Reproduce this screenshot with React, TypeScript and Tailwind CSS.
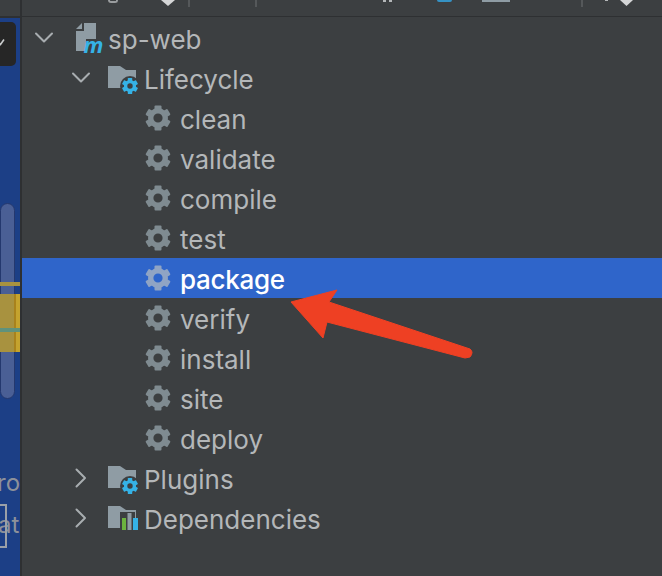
import React from "react";

function Gear({ color = "#7f8b91", size = 26 }: { color?: string; size?: number }) {
  const teeth = [0, 60, 120, 180, 240, 300];
  return (
    <svg width={size} height={size} viewBox="0 0 26 26" className="shrink-0">
      {teeth.map((a) => (
        <rect key={a} x="9.5" y="0.4" width="7" height="6" rx="1" fill={color} transform={`rotate(${a} 13 13)`} />
      ))}
      <circle cx="13" cy="13" r="7.3" fill="none" stroke={color} strokeWidth="5.4" />
    </svg>
  );
}

function Chevron({ open }: { open: boolean }) {
  return (
    <svg width="20" height="20" viewBox="0 0 20 20" className="shrink-0" fill="none" stroke="#a8adb0" strokeWidth="2" strokeLinecap="round" strokeLinejoin="round">
      {open ? <path d="M2 5.5 L10 13.5 L18 5.5" /> : <path d="M5.5 1.5 L14 10 L5.5 18.5" />}
    </svg>
  );
}

function FolderGear() {
  return (
    <svg width="32" height="32" viewBox="0 0 32 32" className="shrink-0">
      <path d="M0 4 H12 L18 8 H28 V26 H0 Z" fill="#8f9ca4" />
      <circle cx="22" cy="24" r="10" fill="#3c3f41" />
      <g fill="#35b2e6">
        {[0, 60, 120, 180, 240, 300].map((a) => (
          <rect key={a} x="19.8" y="16" width="4.4" height="4" rx="0.5" transform={`rotate(${a} 22 24)`} />
        ))}
      </g>
      <circle cx="22" cy="24" r="4.4" fill="none" stroke="#35b2e6" strokeWidth="3.4" />
    </svg>
  );
}

function FolderBars() {
  return (
    <svg width="32" height="32" viewBox="0 0 32 32" className="shrink-0">
      <path d="M0 4 H12 L18 8 H28 V26 H0 Z" fill="#8f9ca4" />
      <rect x="12" y="10" width="20" height="22" fill="#3c3f41" />
      <rect x="27" y="8" width="1" height="8" fill="#8f9ca4" />
      <rect x="14" y="16" width="4" height="12" fill="#6cb33f" />
      <rect x="19.5" y="11" width="4" height="17" fill="#8f9ca4" />
      <rect x="25" y="16" width="5" height="12" fill="#35b2e6" />
    </svg>
  );
}

function ModuleIcon() {
  return (
    <svg width="34" height="40" viewBox="0 -2 34 40" className="shrink-0">
      <path d="M10 3 H22 V19 H12 V31 H2 V11 H10 Z" fill="#8f9ca4" />
      <path d="M2 9 L8 3 V9 Z" fill="#8f9ca4" />
      <text x="9.5" y="33" fontFamily="'Open Sans', sans-serif" fontStyle="italic" fontWeight="700" fontSize="22" fill="#35b2e6">m</text>
    </svg>
  );
}

const goals = ["clean", "validate", "compile", "test", "package", "verify", "install", "site", "deploy"];

export default function App() {
  return (
    <div className="w-[662px] h-[576px] overflow-hidden flex bg-[#3c3f41] relative" style={{ fontFamily: "Inter, 'Noto Sans', sans-serif" }}>
      {/* left editor strip */}
      <div className="w-[20px] shrink-0 h-full bg-[#1c3f86] relative overflow-hidden">
        <div className="absolute left-0 top-0 w-full h-[16px] bg-[#3c3f41]" />
        <div className="absolute left-0 top-[16px] w-full h-[2px] bg-[#2e3032]" />
        <div className="absolute left-[-14px] top-[22px] w-[30px] h-[44px] rounded-[5px] bg-[#262626]" />
        <svg className="absolute left-0 top-[38px]" width="6" height="8" viewBox="0 0 6 8" fill="none" stroke="#c9cbcc" strokeWidth="1.6">
          <path d="M-2 4 L0.5 6.5 L4 1.5" />
        </svg>
        <div className="absolute left-0 top-[203px] w-[15px] h-[196px] rounded-[8px] bg-[#4a5f95] border border-[#24386e]" />
        <div className="absolute left-0 top-[282px] w-full h-[4px] bg-[#a8923f]" />
        <div className="absolute left-0 top-[294px] w-full h-[58px] flex">
          <div className="w-[14px] bg-[#a8923f]" />
          <div className="w-[2px] bg-[#a8821c]" />
          <div className="flex-1 bg-[#c4a32e]" />
        </div>
        <div className="absolute left-0 top-[328px] w-full h-[4px] bg-[#5f927c]" />
        <span className="absolute left-[-3px] top-[469px] text-[24px] leading-[28px] text-[#8d919a]">ro</span>
        <span className="absolute left-[-2px] top-[511px] text-[24px] leading-[28px] text-[#8d919a]">at</span>
        <div className="absolute left-[-6px] top-[504px] w-[13px] h-[44px] border-2 border-[#9aa0a8]" />
      </div>
      <div className="w-[2px] shrink-0 h-full bg-[#2e3032]" />

      {/* tool window */}
      <div className="flex-1 min-w-0 flex flex-col">
        <div className="h-[16px] shrink-0 relative">
          <div className="absolute left-[86px] top-0 w-[10px] h-[3px] rounded-b-full border-b-2 border-x-2 border-[#9a9d9f]" />
          <div className="absolute left-[139px] top-0 w-[14px] h-[6px] bg-[#d5d6d7] [clip-path:polygon(0_0,100%_0,50%_100%)]" />
          <div className="absolute left-[166px] top-0 w-[2px] h-[7px] bg-[#55585a]" />
          <div className="absolute left-[233px] top-0 w-[2px] h-[7px] bg-[#55585a]" />
          <div className="absolute left-[361px] top-0 w-[3px] h-[2px] bg-[#b4b7b9]" />
          <div className="absolute left-[367px] top-0 w-[3px] h-[2px] bg-[#b4b7b9]" />
          <div className="absolute left-[415px] top-0 w-[15px] h-[2px] rounded-b-full bg-[#3592c4]" />
          <div className="absolute left-[460px] top-0 w-[28px] h-[2px] bg-[#8f9ca4]" />
          <div className="absolute left-[559px] top-0 w-[2px] h-[7px] bg-[#55585a]" />
          <div className="absolute left-[583px] top-0 w-[3px] h-[1px] bg-[#b4b7b9]" />
          <div className="absolute left-[598px] top-0 w-[13px] h-[6px] bg-[#d5d6d7] [clip-path:polygon(0_0,100%_0,50%_100%)]" />
        </div>
        <div className="h-[1px] shrink-0 bg-[#2e3032]" />
        <div className="h-[1px] shrink-0" />

        <div className="flex flex-col text-[26px] text-[#b4b7b9]">
          <div className="h-[40px] flex items-center pl-[12px]">
            <Chevron open />
            <div className="ml-[20px] flex"><ModuleIcon /></div>
            <span className="mt-[2px]">sp-web</span>
          </div>
          <div className="h-[40px] flex items-center pl-[49px]">
            <Chevron open />
            <div className="ml-[17px] w-[36px] flex"><FolderGear /></div>
            <span className="mt-[2px]">Lifecycle</span>
          </div>
          {goals.map((g) => {
            const sel = g === "package";
            return (
              <div key={g} className={`h-[40px] flex items-center pl-[123px] ${sel ? "bg-[#2f65ca] text-white font-[450] tracking-[-0.3px]" : ""}`}>
                <Gear color={sel ? "#90a4c4" : "#7f8b91"} />
                <span className="ml-[9px] mt-[2px]">{g}</span>
              </div>
            );
          })}
          <div className="h-[40px] flex items-center pl-[49px]">
            <Chevron open={false} />
            <div className="ml-[17px] w-[36px] flex"><FolderGear /></div>
            <span className="mt-[2px]">Plugins</span>
          </div>
          <div className="h-[40px] flex items-center pl-[49px]">
            <Chevron open={false} />
            <div className="ml-[17px] w-[36px] flex"><FolderBars /></div>
            <span className="mt-[2px]">Dependencies</span>
          </div>
        </div>
      </div>

      {/* annotation arrow */}
      <svg className="absolute left-0 top-0 pointer-events-none" width="662" height="576" viewBox="0 0 662 576">
        <path d="M291 302 L337 290 L329 302 L470 349 Q474 352 470 357 L465 358 L327 322 L323 338 Z" fill="#ee4023" stroke="#ee4023" strokeWidth="1" strokeLinejoin="round" />
      </svg>
    </div>
  );
}
